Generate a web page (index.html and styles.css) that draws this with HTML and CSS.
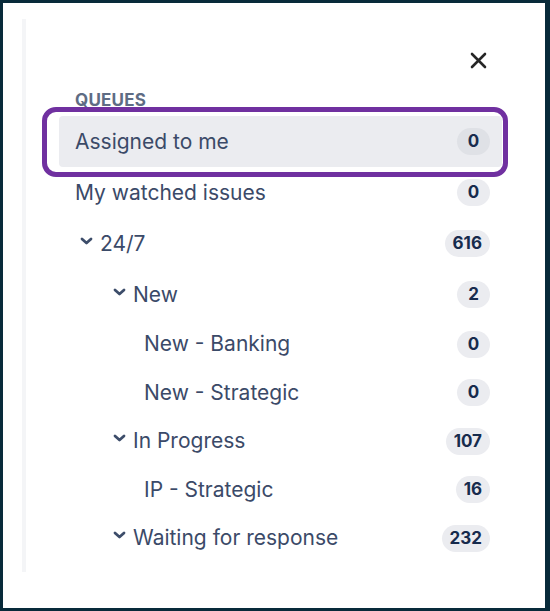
FILE: index.html
```html
<!DOCTYPE html>
<html>
<head>
<meta charset="utf-8">
<link rel="stylesheet" href="styles.css">
</head>
<body>
<div class="frame">
  <div class="rail"></div>
  <nav class="nav">
    <div class="top">
      <svg class="close" width="17" height="17" viewBox="0 0 17 17"><path d="M2 2 L15 15 M15 2 L2 15" stroke="#262626" stroke-width="2.6" stroke-linecap="round" fill="none"/></svg>
    </div>
    <div class="heading">QUEUES</div>
    <ul class="list">
      <li class="item active lvl0"><span class="label">Assigned to me</span><span class="badge">0</span></li>
      <li class="item lvl0"><span class="label">My watched issues</span><span class="badge">0</span></li>
      <li class="item lvl0p"><svg class="chev" width="13" height="8" viewBox="0 0 13 8"><path d="M2 2 L6.5 6 L11 2" stroke="#3d4d6a" stroke-width="2.8" stroke-linecap="round" stroke-linejoin="round" fill="none"/></svg><span class="label">24/7</span><span class="badge">616</span></li>
      <li class="item lvl1p"><svg class="chev" width="13" height="8" viewBox="0 0 13 8"><path d="M2 2 L6.5 6 L11 2" stroke="#3d4d6a" stroke-width="2.8" stroke-linecap="round" stroke-linejoin="round" fill="none"/></svg><span class="label">New</span><span class="badge">2</span></li>
      <li class="item lvl2"><span class="label">New - Banking</span><span class="badge">0</span></li>
      <li class="item lvl2"><span class="label">New - Strategic</span><span class="badge">0</span></li>
      <li class="item lvl1p"><svg class="chev" width="13" height="8" viewBox="0 0 13 8"><path d="M2 2 L6.5 6 L11 2" stroke="#3d4d6a" stroke-width="2.8" stroke-linecap="round" stroke-linejoin="round" fill="none"/></svg><span class="label">In Progress</span><span class="badge">107</span></li>
      <li class="item lvl2"><span class="label">IP - Strategic</span><span class="badge">16</span></li>
      <li class="item lvl1p"><svg class="chev" width="13" height="8" viewBox="0 0 13 8"><path d="M2 2 L6.5 6 L11 2" stroke="#3d4d6a" stroke-width="2.8" stroke-linecap="round" stroke-linejoin="round" fill="none"/></svg><span class="label">Waiting for response</span><span class="badge">232</span></li>
    </ul>
  </nav>
  <div class="annot"></div>
</div>
</body>
</html>
```
FILE: styles.css
```css
html, body {
  margin: 0;
  padding: 0;
}
body {
  background: #082a3a;
  padding: 3px 5px 3px 3px;
  width: 550px;
  height: 611px;
  box-sizing: border-box;
  font-family: Inter, "Noto Sans", sans-serif;
}
.frame {
  position: relative;
  background: #ffffff;
  height: 605px;
  display: flex;
  align-items: flex-start;
}
.rail {
  width: 4px;
  height: 553px;
  margin: 16px 0 0 19px;
  background: #f4f5f7;
  flex: none;
}
.nav {
  width: 443px;
  margin-left: 33px;
  display: flex;
  flex-direction: column;
}
.top {
  height: 87px;
  display: flex;
  justify-content: flex-end;
  align-items: flex-start;
}
.close {
  margin-top: 49px;
  margin-right: 15px;
}
.heading {
  font-size: 17px;
  line-height: 20px;
  font-weight: 700;
  color: #5e6c84;
  padding-left: 16px;
  letter-spacing: 0.2px;
  margin-bottom: 6px;
}
.list {
  list-style: none;
  margin: 0;
  padding: 0;
}
.item {
  height: 48.5px;
  display: flex;
  align-items: center;
  padding-right: 12px;
  font-size: 21px;
  line-height: 24px;
  color: #3b4a68;
  border-radius: 4px;
}
.item:nth-child(-n+4) {
  height: 51px;
}
.item.active {
  background: #ebecf0;
}
.label {
  flex: 1;
}
.lvl0 { padding-left: 16px; }
.lvl0p { padding-left: 21px; }
.lvl1p { padding-left: 54px; }
.lvl2 { padding-left: 85px; }
.chev {
  margin-right: 7px;
  margin-top: -6px;
  flex: none;
}
.badge {
  height: 27px;
  min-width: 33px;
  box-sizing: border-box;
  padding: 0 8px;
  border-radius: 14px;
  background: #ebecf0;
  color: #172b4d;
  font-size: 17px;
  font-weight: 700;
  line-height: 27px;
  text-align: center;
}
.active .badge {
  background: #dfe1e6;
}
.annot {
  position: absolute;
  left: 39px;
  top: 104px;
  width: 466px;
  height: 70px;
  box-sizing: border-box;
  border: 5px solid #7030a0;
  border-radius: 14px;
}
```
